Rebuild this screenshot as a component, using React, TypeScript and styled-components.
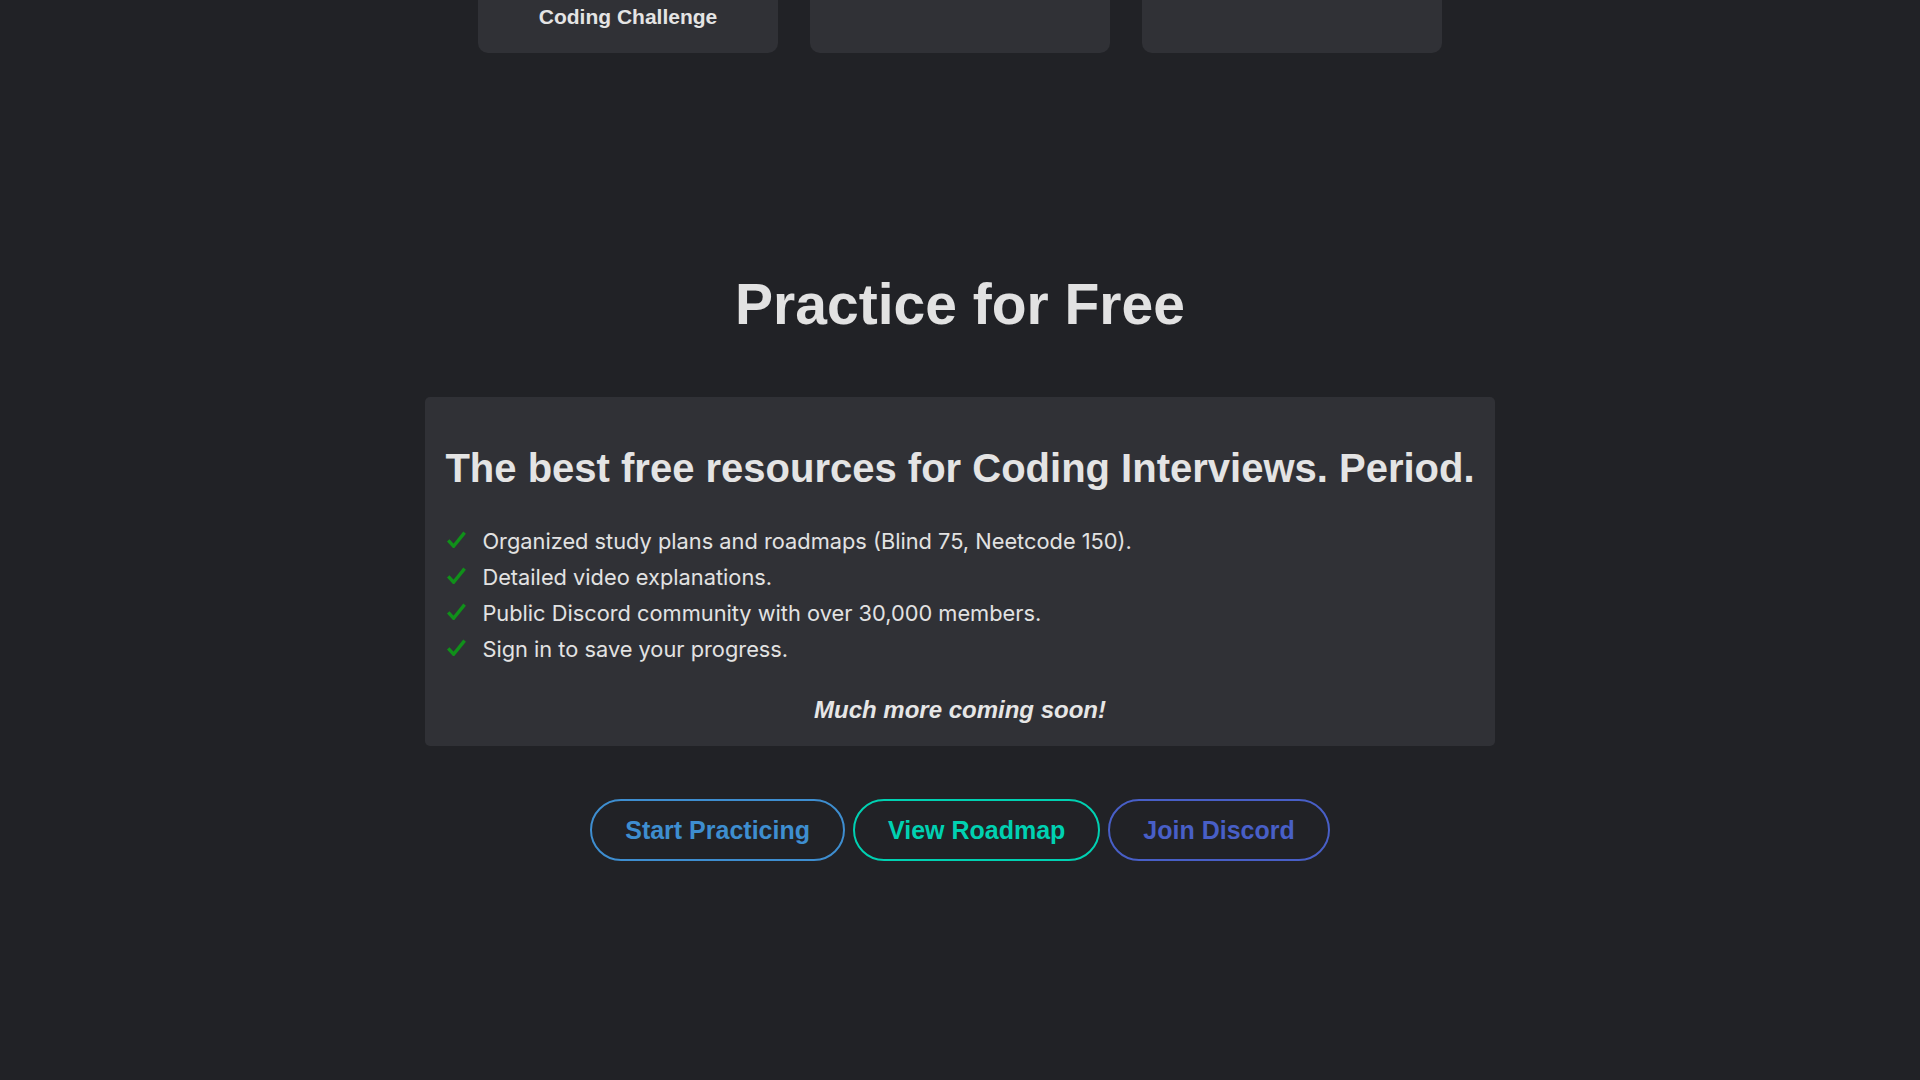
import * as React from 'react';
import styled, { createGlobalStyle } from 'styled-components';

const GlobalStyle = createGlobalStyle`
  html, body {
    margin: 0;
    padding: 0;
    background: #212226;
    color: #e2e2e2;
    font-family: 'Liberation Sans', Arial, sans-serif;
  }
  #root {
    min-height: 100vh;
  }
`;

const features = [
  'Organized study plans and roadmaps (Blind 75, Neetcode 150).',
  'Detailed video explanations.',
  'Public Discord community with over 30,000 members.',
  'Sign in to save your progress.',
];

const actions = [
  { label: 'Start Practicing', color: '#3e8ed0' },
  { label: 'View Roadmap', color: '#00d1b2' },
  { label: 'Join Discord', color: '#485fc7' },
];

const CheckIcon = () => (
  <svg width="19" height="17" viewBox="0 0 19 17" aria-hidden="true">
    <path
      d="M1.2 9.4 L6.6 15.2 L17.6 1.6"
      fill="none"
      stroke="#10901a"
      strokeWidth="3.4"
      strokeLinecap="butt"
      strokeLinejoin="miter"
    />
  </svg>
);

export default function App() {
  return (
    <Page>
      <GlobalStyle />
      <CardRow>
        <TopicCard>Coding Challenge</TopicCard>
        <TopicCard />
        <TopicCard />
      </CardRow>

      <Section>
        <Title>Practice for Free</Title>
        <InfoCard>
          <InfoHeading>
            The best free resources for Coding Interviews. Period.
          </InfoHeading>
          <FeatureList>
            {features.map((f) => (
              <FeatureItem key={f}>
                <CheckIcon />
                <span>{f}</span>
              </FeatureItem>
            ))}
          </FeatureList>
          <Soon>Much more coming soon!</Soon>
        </InfoCard>
        <Buttons>
          {actions.map((a) => (
            <OutlineButton key={a.label} $color={a.color}>
              {a.label}
            </OutlineButton>
          ))}
        </Buttons>
      </Section>
    </Page>
  );
}

const Page = styled.div`
  display: flex;
  flex-direction: column;
  align-items: center;
  min-height: 100vh;
  background: #212226;
`;

const CardRow = styled.div`
  display: grid;
  grid-template-columns: repeat(3, 300px);
  column-gap: 32px;
`;

const TopicCard = styled.div`
  height: 53px;
  box-sizing: border-box;
  display: flex;
  align-items: flex-end;
  justify-content: center;
  padding-bottom: 24px;
  background: #303136;
  border-radius: 0 0 10px 10px;
  color: #e4e4e4;
  font-size: 21px;
  font-weight: 700;
  line-height: 1.15;
`;

const Section = styled.section`
  display: flex;
  flex-direction: column;
  align-items: center;
  padding-top: 219px;
`;

const Title = styled.h1`
  margin: 0 0 59px;
  font-size: 57px;
  line-height: 1.15;
  font-weight: 700;
  color: #e2e2e2;
`;

const InfoCard = styled.div`
  width: fit-content;
  box-sizing: border-box;
  padding: 48px 20px 23px;
  background: #303136;
  border-radius: 5px;
`;

const InfoHeading = styled.h2`
  margin: 0 0 32px;
  font-size: 40px;
  line-height: 46px;
  font-weight: 700;
  color: #e4e4e4;
  white-space: nowrap;
`;

const FeatureList = styled.ul`
  list-style: none;
  margin: 0 0 29px;
  padding: 0 0 0 2px;
`;

const FeatureItem = styled.li`
  display: flex;
  align-items: center;
  gap: 16px;
  height: 36px;
  font-family: Inter, 'Noto Sans', sans-serif;
  font-size: 21.8px;
  color: #e2e2e2;

  svg {
    flex: none;
    margin-top: -2px;
  }
`;

const Soon = styled.p`
  margin: 0;
  text-align: center;
  font-size: 24px;
  line-height: 1.15;
  font-weight: 700;
  font-style: italic;
  color: #e6e6e6;
`;

const Buttons = styled.div`
  display: flex;
  gap: 8px;
  margin-top: 53px;
`;

const OutlineButton = styled.button<{ $color: string }>`
  height: 62px;
  box-sizing: border-box;
  padding: 0 33px;
  border: 2px solid ${(p) => p.$color};
  border-radius: 999px;
  background: transparent;
  color: ${(p) => p.$color};
  font-family: 'Liberation Sans', Arial, sans-serif;
  font-size: 25px;
  font-weight: 700;
  cursor: pointer;
`;
